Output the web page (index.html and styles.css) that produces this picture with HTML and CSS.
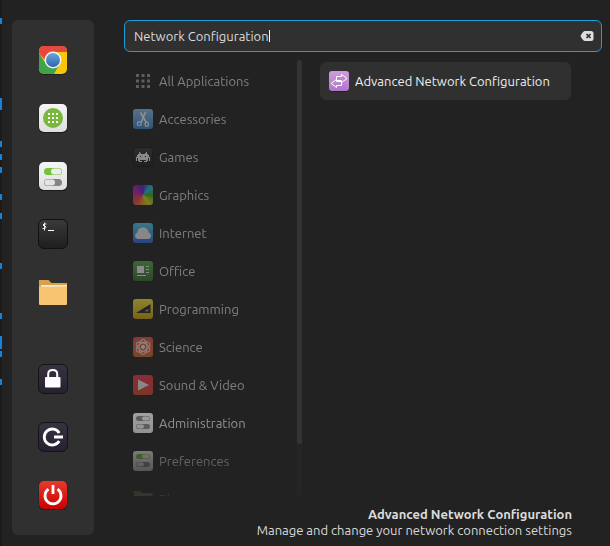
FILE: index.html
```html
<!DOCTYPE html>
<html lang="en">
<head>
<meta charset="utf-8">
<title>Application menu</title>
<link rel="stylesheet" href="styles.css">
</head>
<body>
<svg width="0" height="0" class="defs" aria-hidden="true">
  <defs>
    <linearGradient id="white" x2="0" y2="1"><stop stop-color="#f5f5f5"/><stop offset="1" stop-color="#dedede"/></linearGradient>
    <linearGradient id="black" x2="0" y2="1"><stop stop-color="#3a3a3a"/><stop offset="1" stop-color="#1e1e1e"/></linearGradient>
    <linearGradient id="plum" x2="0" y2="1"><stop stop-color="#383340"/><stop offset="1" stop-color="#272030"/></linearGradient>
    <linearGradient id="red" x2="0" y2="1"><stop stop-color="#e83a2d"/><stop offset="1" stop-color="#cb0000"/></linearGradient>
    <linearGradient id="blue" x2="0" y2="1"><stop stop-color="#6aa6dc"/><stop offset="1" stop-color="#2e65a8"/></linearGradient>
    <linearGradient id="access" x2="0" y2="1"><stop stop-color="#8ec0ee"/><stop offset="1" stop-color="#3d86d2"/></linearGradient>
    <linearGradient id="sky" x2="0" y2="1"><stop stop-color="#51cde5"/><stop offset="1" stop-color="#3567d8"/></linearGradient>
    <linearGradient id="green" x2="0" y2="1"><stop stop-color="#59aa4d"/><stop offset="1" stop-color="#3a6d30"/></linearGradient>
    <linearGradient id="yellow" x2="0" y2="1"><stop stop-color="#f5e743"/><stop offset="1" stop-color="#cda30d"/></linearGradient>
    <linearGradient id="orange" x2="0" y2="1"><stop stop-color="#e5574a"/><stop offset="1" stop-color="#d7662c"/></linearGradient>
    <linearGradient id="media" x2="0" y2="1"><stop stop-color="#f13455"/><stop offset="1" stop-color="#d64a29"/></linearGradient>
    <linearGradient id="violet" x2="0" y2="1"><stop stop-color="#d09ce0"/><stop offset="1" stop-color="#b076c8"/></linearGradient>
    <clipPath id="tile"><rect x="1" y="1" width="28" height="28" rx="5"/></clipPath>
    <symbol id="toggles" viewBox="0 0 30 30">
      <rect x=".5" y="1" width="29" height="29" rx="5.500" fill="#1c1c1c"/>
      <rect x="1" y="1" width="28" height="28" rx="5" fill="url(#white)"/>
      <rect x="6" y="7" width="18" height="7" rx="3.500" fill="currentColor"/>
      <rect x="13" y="7.500" width="10.500" height="6" rx="3" fill="#ededed"/>
      <rect x="6" y="18" width="18" height="7" rx="3.500" fill="#858585"/>
      <rect x="6.500" y="18.500" width="10.500" height="6" rx="3" fill="#e4e4e4"/>
    </symbol>
    <symbol id="toggles-small" viewBox="0 0 20 20">
      <rect width="20" height="20" rx="3" fill="url(#white)"/>
      <rect x="3" y="3" width="14" height="5" rx="2.500" fill="currentColor"/>
      <rect x="9" y="3.500" width="7.500" height="4" rx="2" fill="#ededed"/>
      <rect x="3" y="11" width="14" height="5" rx="2.500" fill="#858585"/>
      <rect x="3.500" y="11.500" width="7.500" height="4" rx="2" fill="#e4e4e4"/>
    </symbol>
    <symbol id="folder" viewBox="0 0 30 30">
      <path d="M1 3h9.500l3 3H29v8H1z" fill="#d99f49"/>
      <path d="M3 8h26v4H3z" fill="#f1eadc"/>
      <path d="M1 9.500q5 .5 28-.3V27q0 1-1 1H2q-1 0-1-1z" fill="#f8c471"/>
    </symbol>
  </defs>
</svg>

<svg class="edge" width="2" height="546" fill="#1583dc" aria-hidden="true">
  <path d="M0 18h2v6H0zM0 98h2v12H0zM0 141h2v6H0zM0 154h2v6H0zM0 167h2v6H0zM0 194h2v6H0zM0 213h2v6H0zM0 263h2v6H0zM0 313h2v6H0zM0 336h2v13H0zM0 351h2v6H0zM0 379h2v6H0z"/>
</svg>

<div class="menu">
  <nav class="sidebar" aria-label="Favorites">
    <div class="group">
      <button aria-label="Web browser"><svg viewBox="0 0 30 30">
        <rect x="1" y="2" width="28" height="28" rx="5" fill="#202020"/>
        <g clip-path="url(#tile)">
          <path d="M1 1h28v28H1z" fill="#f7c60e"/>
          <path d="M1 1h28v6H15v8H7L1 8z" fill="#e5483d"/>
          <path d="M1 8l7 11 7-2 6 3-5 9H1z" fill="#3fa447"/>
        </g>
        <circle cx="15" cy="15" r="8.500" fill="#f4f4f4"/><circle cx="15" cy="15" r="7" fill="url(#blue)"/>
      </svg></button>
      <button aria-label="Software manager"><svg viewBox="0 0 30 30">
        <rect x=".5" y="1" width="29" height="29" rx="5.500" fill="#1c1c1c"/>
        <rect x="1" y="1" width="28" height="28" rx="5" fill="url(#white)"/>
        <circle cx="15" cy="15" r="10" fill="#78b83c"/>
        <path d="M10 11h10M10 15h10M10 19h10" fill="none" stroke="#fff" stroke-width="2" stroke-dasharray="2 2"/>
      </svg></button>
      <button aria-label="System settings"><svg class="on"><use href="#toggles"/></svg></button>
      <button aria-label="Terminal"><svg viewBox="0 0 30 30">
        <rect x=".5" y=".5" width="29" height="29" rx="5.500" fill="url(#black)" stroke="#111"/>
        <path d="M6.500 3.500v8M8.500 5H6q-2 1 0 2h1q2 1 0 2.500H4.500" fill="none" stroke="#e8e8e8"/>
        <path d="M10 11.500h6" stroke="#fff"/>
      </svg></button>
      <button aria-label="Files"><svg><use href="#folder"/></svg></button>
    </div>
    <div class="group">
      <button aria-label="Lock screen"><svg viewBox="0 0 30 30">
        <rect x=".5" y=".5" width="29" height="29" rx="5.500" fill="url(#plum)" stroke="#151318"/>
        <rect x="7" y="13" width="15.500" height="10.500" rx="1" fill="#fff"/>
        <path d="M10.200 14v-4q0-4 4.500-4t4.500 4v4" fill="none" stroke="#fff" stroke-width="2"/>
      </svg></button>
      <button aria-label="Log out"><svg viewBox="0 0 30 30">
        <rect x=".5" y=".5" width="29" height="29" rx="5.500" fill="url(#plum)" stroke="#151318"/>
        <path d="M21.200 11a8 8 0 1 0 0 8M16 15h9" fill="none" stroke="#fff" stroke-width="2.800"/>
      </svg></button>
      <button aria-label="Shut down"><svg viewBox="0 0 30 30">
        <rect x=".5" y="1" width="29" height="29" rx="5.500" fill="#202020"/>
        <rect x="1" y="1" width="28" height="28" rx="5" fill="url(#red)"/>
        <path d="M10.500 9.200a8 8 0 1 0 9 0M15 5v9" fill="none" stroke="#fff" stroke-width="2.800"/>
      </svg></button>
    </div>
  </nav>

  <main class="main">
    <label class="search">
      <input type="text" value="Network Configuration" aria-label="Search">
      <span class="caret"></span>
      <button aria-label="Clear search"><svg viewBox="0 0 14 12"><path d="M5 1h6q2.500 0 2.500 2.500v5Q13.500 11 11 11H5Q3 11 .5 6 3 1 5 1z" fill="#dedede"/><path d="M6.500 4l4 4m0-4l-4 4" stroke="#2f2f2f" stroke-width="1.700"/></svg></button>
    </label>

    <div class="content">
      <div class="categories">
        <button><svg viewBox="0 0 20 20"><path d="M3 4.500h14M3 10h14M3 15.500h14" fill="none" stroke="#999" stroke-width="3" stroke-dasharray="3 2.500"/></svg>All Applications</button>
        <button><svg viewBox="0 0 20 20"><rect width="20" height="20" rx="3" fill="url(#access)"/><path d="M12.500 3L8 13.500M7.500 3.500L13 13" stroke="#fff" stroke-width="1.500"/><ellipse cx="6.300" cy="14.700" rx="2" ry="1.800" fill="none" stroke="#fff" stroke-width="1.100"/><ellipse cx="13.700" cy="15.300" rx="1.700" ry="2.200" fill="none" stroke="#fff" stroke-width="1.100"/></svg>Accessories</button>
        <button><svg viewBox="0 0 20 20"><rect x=".5" y=".5" width="19" height="19" rx="3" fill="url(#black)" stroke="#161616"/><path d="M6 5h1v1h1v1h4V6h1V5h1v2h1v1h1v2h1v4h-1v-3h-1v3h-1v1h-3v-1h2v-1H7v1h2v1H6v-1H5v-3H4v3H3v-4h1V8h1V7h1z" fill="#f0f0f0"/><path d="M7 9h1v1H7zM12 9h1v1h-1z" fill="#222"/></svg>Games</button>
        <button><span class="spectrum"></span>Graphics</button>
        <button><svg viewBox="0 0 20 20"><rect width="20" height="20" rx="3" fill="url(#sky)"/><path d="M5 16q-3-.5-3-3.500 0-2.500 2.500-3Q4.500 5 8 5q3-2 6 1 2 1 1.500 3.500Q18 10 18 13q0 2.500-3 3z" fill="#ececec"/></svg>Internet</button>
        <button><svg viewBox="0 0 20 20"><rect width="20" height="20" rx="3" fill="url(#green)"/><path d="M4 5h7v7H4zM13 5h3v1h-3zM13 8h3v1h-3zM13 11h3v1h-3zM4 14h9v1H4z" fill="#f4f4f4"/></svg>Office</button>
        <button><svg viewBox="0 0 20 20"><rect width="20" height="20" rx="3" fill="url(#yellow)"/><path fill-rule="evenodd" d="M3 14L17.500 5v9zM11.500 12.300h3.700V10z" fill="#25272c"/></svg>Programming</button>
        <button><svg viewBox="0 0 20 20"><rect width="20" height="20" rx="3" fill="url(#orange)"/><g fill="none" stroke="#f2ddd7" stroke-width="1.100"><ellipse cx="10" cy="10" rx="4" ry="7.500"/><ellipse cx="10" cy="10" rx="4" ry="7.500" transform="rotate(60 10 10)"/><ellipse cx="10" cy="10" rx="4" ry="7.500" transform="rotate(120 10 10)"/></g><circle cx="10" cy="10" r="2" fill="#f6eeee"/></svg>Science</button>
        <button><svg viewBox="0 0 20 20"><rect width="20" height="20" rx="3" fill="url(#media)"/><path d="M5 4.500L16 10 5 15.500z" fill="#eee"/></svg>Sound &amp; Video</button>
        <button class="bright"><svg class="off"><use href="#toggles-small"/></svg>Administration</button>
        <button><svg class="on"><use href="#toggles-small"/></svg>Preferences</button>
        <button><svg><use href="#folder"/></svg>Places</button>
      </div>
      <div class="scrollbar"><div class="thumb"></div></div>
      <div class="results">
        <button><svg viewBox="0 0 20 20"><rect y="1" width="20" height="20" rx="3" fill="#222"/><rect width="20" height="20" rx="3" fill="url(#violet)"/><path d="M7.500 5.500h5V3.500L18 7.500l-5.500 4v-2h-5zM12.500 10.500h-5v-2L2 12.500l5.500 4v-2h5z" fill="#bd87d0" stroke="#fff"/></svg>Advanced Network Configuration</button>
      </div>
    </div>

    <footer>
      <strong>Advanced Network Configuration</strong>
      <span>Manage and change your network connection settings</span>
    </footer>
  </main>
</div>
</body>
</html>
```
FILE: styles.css
```css
* { box-sizing: border-box; }

body {
  margin: 0;
  background: #222;
  color: #dadada;
  font: 13px/16px Ubuntu, "Noto Sans", sans-serif;
  overflow: hidden;
}

button {
  border: 0;
  padding: 0;
  background: none;
  color: inherit;
  font: inherit;
}

.defs { position: absolute; }

.edge {
  position: absolute;
  top: 0;
  left: 0;
  background: #1b1b1b;
}

.menu {
  display: flex;
  gap: 30px;
  height: 100vh;
  padding: 20px 8px 8px 12px;
}

.sidebar {
  display: flex;
  flex-direction: column;
  justify-content: space-between;
  flex: 0 0 82px;
  margin-bottom: 3px;
  padding: 11px 0;
  border-radius: 6px;
  background: #303030;
}

.group {
  display: flex;
  flex-direction: column;
}

.group button {
  display: grid;
  place-items: center;
  height: 58px;
}

.group svg {
  width: 30px;
  height: 30px;
}

.on { color: #73c23a; }
.off { color: #858585; }

.main {
  display: flex;
  flex-direction: column;
  flex: 1;
  min-width: 0;
}

.search {
  display: flex;
  align-items: center;
  height: 32px;
  padding: 0 7px 0 9px;
  border: 1px solid #1f9ede;
  border-radius: 6px;
  background: #303030;
}

.search input {
  field-sizing: content;
  min-width: 0;
  padding: 0;
  border: 0;
  outline: 0;
  background: none;
  color: #dadada;
  caret-color: transparent;
  font: inherit;
}

.caret {
  width: 1px;
  height: 12px;
  background: #fff;
}

.search button,
.search svg {
  display: block;
  width: 14px;
  height: 12px;
}

.search button { margin-left: auto; }

.content {
  display: flex;
  flex: 1;
  min-height: 0;
  margin: 8px 0 10px;
}

.categories {
  width: 173px;
  padding: 2px 0 0 9px;
  overflow: hidden;
  -webkit-mask-image: linear-gradient(#000 calc(100% - 56px), rgba(0, 0, 0, 0.2));
  mask-image: linear-gradient(#000 calc(100% - 56px), rgba(0, 0, 0, 0.2));
}

.categories button {
  display: flex;
  align-items: center;
  gap: 6px;
  width: 100%;
  height: 38px;
  opacity: 0.5;
}

.categories .bright { opacity: 0.6; }

.categories svg,
.results svg {
  flex: none;
  width: 20px;
  height: 20px;
  overflow: visible;
}

.spectrum {
  width: 20px;
  height: 20px;
  border-radius: 3px;
  background: conic-gradient(#5720cf, #20c6df 45deg, #39a925 90deg, #d8e015 145deg, #f34945 225deg, #c020ad 290deg, #5720cf);
}

.scrollbar {
  width: 5px;
  border-radius: 3px;
  background: #252525;
}

.thumb {
  height: 88%;
  border-radius: 3px;
  background: #343434;
}

.results {
  flex: 1;
  padding: 2px 31px 0 18px;
}

.results button {
  display: flex;
  align-items: center;
  gap: 6px;
  width: 100%;
  height: 38px;
  padding: 0 9px;
  border-radius: 6px;
  background: #303030;
  color: #eee;
  white-space: nowrap;
}

footer {
  display: flex;
  flex-direction: column;
  align-items: flex-end;
  padding-right: 30px;
}

footer strong { font-weight: 600; }
```
